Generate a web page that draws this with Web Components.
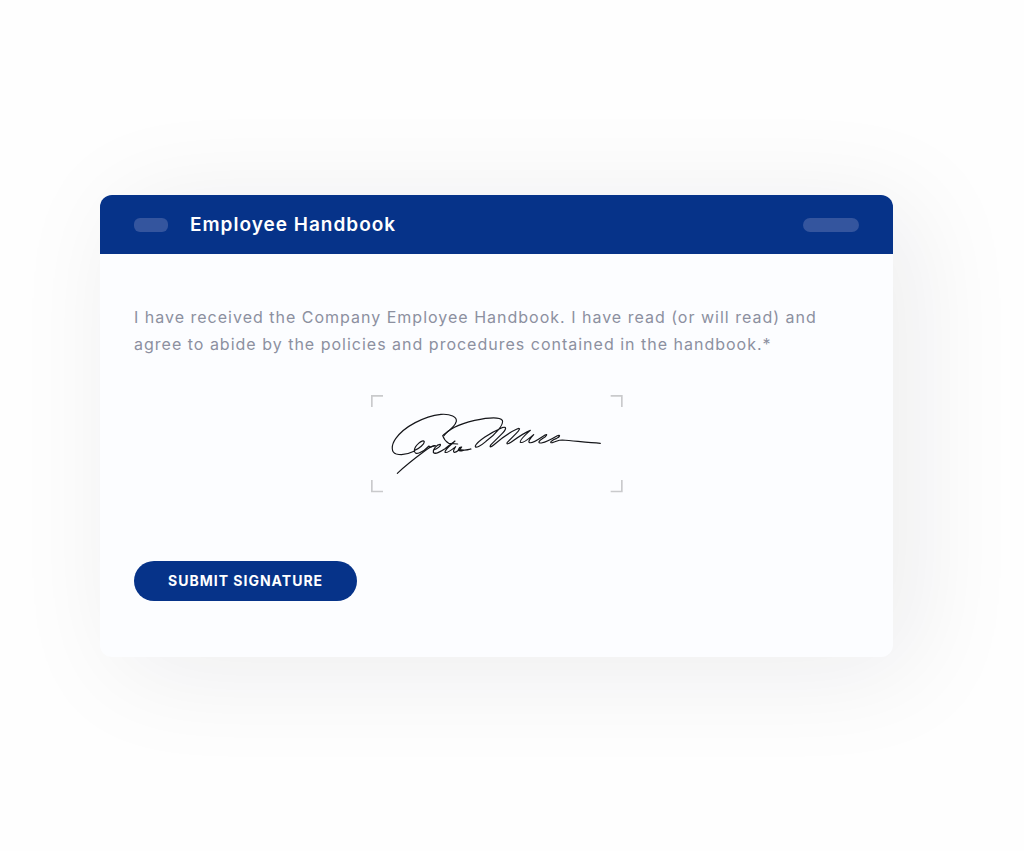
<!DOCTYPE html>
<html lang="en">
<head>
<meta charset="utf-8">
<meta name="viewport" content="width=device-width, initial-scale=1">
<title>Employee Handbook</title>
<style>
  body { margin: 0; background: #fefefe; font-family: Inter, "Liberation Sans", sans-serif; }
</style>
</head>
<body>
<signing-page>
  <document-card>
    <card-header slot="header">Employee Handbook</card-header>
    <consent-text>I have received the Company Employee Handbook. I have read (or will read) and agree to abide by the policies and procedures contained in the handbook.*</consent-text>
    <signature-field></signature-field>
    <submit-button>SUBMIT SIGNATURE</submit-button>
  </document-card>
</signing-page>
<script>
const define = (name, html) => {
  const template = document.createElement('template');
  template.innerHTML = html;
  customElements.define(name, class extends HTMLElement {
    constructor() {
      super();
      this.attachShadow({ mode: 'open' }).append(template.content.cloneNode(true));
    }
  });
};

define('signing-page', `
  <style>
    :host { display: flex; align-items: center; min-height: 100vh; box-sizing: border-box; padding: 33px 131px 32px 100px; }
    main { flex: 1; min-width: 0; }
  </style>
  <main><slot></slot></main>`);

define('document-card', `
  <style>
    :host { display: block; border-radius: 12px; overflow: hidden; background: #fcfdff; box-shadow: 20px 12px 110px rgba(20, 26, 36, .08); }
    .body { display: flex; flex-direction: column; padding: 50px 34px 56px; }
  </style>
  <article>
    <slot name="header"></slot>
    <div class="body"><slot></slot></div>
  </article>`);

define('card-header', `
  <style>
    :host { display: flex; align-items: center; gap: 22px; height: 59px; padding: 0 34px; background: #063389; color: #fff; }
    h1 { flex: 1; margin: 0; font-size: 19px; line-height: 28px; font-weight: 600; letter-spacing: 1px; }
    .pill { width: 34px; height: 14px; border-radius: 6px; background: #34559e; }
    .pill.wide { width: 56px; border-radius: 7px; }
  </style>
  <span class="pill"></span>
  <h1><slot></slot></h1>
  <span class="pill wide"></span>`);

define('consent-text', `
  <style>
    :host { display: block; color: #8c909f; font-size: 16px; line-height: 27px; letter-spacing: 1px; }
    p { margin: 0; }
  </style>
  <p><slot></slot></p>`);

define('signature-field', `
  <style>
    :host { display: block; align-self: center; width: 252px; margin: 37px 0 68px; }
    svg { display: block; width: 100%; }
    path { fill: none; }
    .corner { stroke: #c9cacc; stroke-width: 5; }
    .ink { stroke: #15161a; stroke-width: 3.500; stroke-linecap: round; stroke-linejoin: round; }
  </style>
  <svg viewBox="18 15 756 294" role="img" aria-label="Handwritten signature">
    <path class="corner" d="M20.500 51V17.500H54M737 17.500H770.500V51M20.500 270V304.500H54M737 304.500H770.500V270"/>
    <path class="ink" d="M147 184C133 191 110 196 94 192C78 187 78 166 92 146C118 109 177 79 228 73C258 71 276 81 274 94C270 111 252 122 233 137C236 146 243 155 251 160L278 162"/>
    <path class="ink" d="M149 181C163 176 178 162 178 155C173 146 149 167 148 181C147 200 176 186 192 168C195 176 202 168 211 167"/>
    <path class="ink" d="M97 250C125 224 151 204 178 184C188 176 198 168 209 167"/>
    <path class="ink" d="M206 180C218 176 229 167 226 163C216 162 203 178 205 187C211 195 226 185 240 176C252 167 262 159 270 153C256 166 238 180 240 187C246 191 262 178 272 170C266 178 263 186 269 187C277 186 288 175 290 171C280 170 278 184 286 183C296 181 306 178 318 177C306 181 290 181 280 178"/>
    <path class="ink" d="M237 137C248 119 284 102 329 91C363 84 403 79 412 91C417 104 391 134 363 154C348 167 330 177 331 168C336 154 376 128 411 113C427 108 424 119 409 133L378 164C372 173 377 173 386 165C411 143 436 126 456 117C468 112 465 119 453 131L427 157C423 164 430 162 439 156C458 142 478 128 496 121C484 132 462 151 466 157C474 162 492 145 506 134C497 144 487 156 494 158C505 161 523 146 540 135C549 130 545 139 534 145C521 153 517 160 529 159C546 155 562 146 577 137C587 133 585 141 575 145C560 150 551 160 562 158C575 155 578 150 592 150C630 153 670 158 706 160"/>
  </svg>`);

define('submit-button', `
  <style>
    :host { display: block; align-self: flex-start; }
    button { display: block; border: 0; border-radius: 20px; height: 40px; padding: 0 34px; background: #063389; color: #fff; font: 700 14px/20px Inter, "Liberation Sans", sans-serif; letter-spacing: 1px; cursor: pointer; }
  </style>
  <button type="button"><slot></slot></button>`);
</script>
</body>
</html>
